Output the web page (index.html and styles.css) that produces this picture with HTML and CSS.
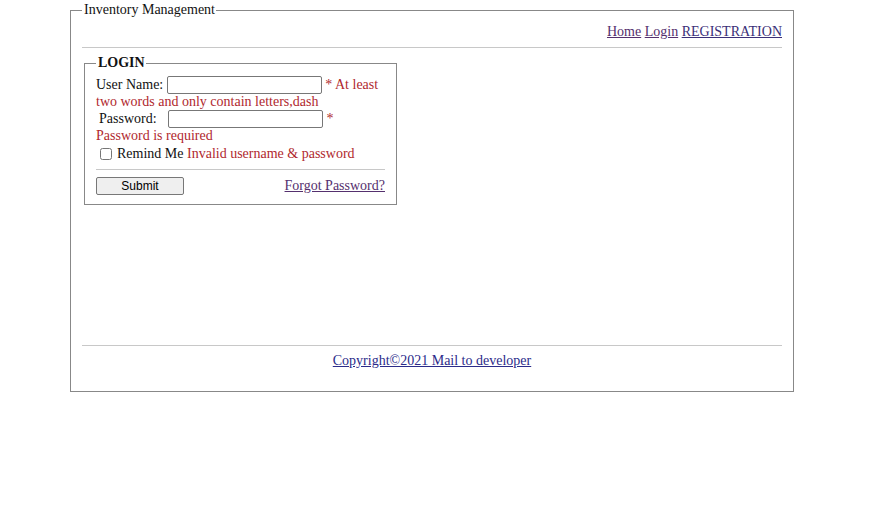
FILE: index.html
```html
<!DOCTYPE html>
<html>
<head>
<meta charset="utf-8">
<link rel="stylesheet" href="styles.css">
</head>
<body>
<fieldset class="main">
  <legend class="main-legend">Inventory Management</legend>
  <nav class="nav">
    <a href="#" class="visited">Home</a> <a href="#" class="visited">Login</a> <a href="#" class="reg">REGISTRATION</a>
  </nav>
  <hr class="rule">
  <div class="content">
    <fieldset class="login">
      <legend class="login-legend">LOGIN</legend>
      <div class="row first">User Name: <input class="field" type="text"> <span class="err">* At least</span></div>
      <div class="err line">two words and only contain letters,dash</div>
      <div class="row pw">Password: <input class="field" type="password"> <span class="err">*</span></div>
      <div class="err line">Password is required</div>
      <div class="row remind"><input class="check" type="checkbox"><span class="remind-text">Remind Me <span class="err">Invalid username &amp; password</span></span></div>
      <hr class="inner-rule">
      <div class="actions">
        <button class="submit">Submit</button>
        <a href="#" class="visited">Forgot Password?</a>
      </div>
    </fieldset>
  </div>
  <hr class="rule">
  <div class="footer"><a href="#" class="copy">Copyright©2021 Mail to developer</a></div>
</fieldset>
</body>
</html>
```
FILE: styles.css
```css
body {
  margin: 2px 8px 8px 8px;
  font-family: "Liberation Serif", "Times New Roman", serif;
  font-size: 14px;
  color: #111;
  background: #fff;
}
a { color: #2b2b8a; }
a.visited { color: #55306e; }
a.reg { color: #3b2f78; }
.main {
  width: 724px;
  height: 390px;
  margin: 0 0 0 62px;
  padding: 0 11px 10px 11px;
  border: 1px solid #888;
  display: flex;
  flex-direction: column;
  box-sizing: border-box;
}
.main-legend {
  padding: 0 1px 0 2px;
  font-size: 14px;
}
.nav {
  text-align: right;
  margin-top: 6px;
}
.rule {
  border: 0;
  border-top: 1px solid #c8c8c8;
  margin: 7px 0 0 0;
  height: 0;
}
.content {
  flex: 1;
  padding-top: 7px;
}
.login {
  width: 313px;
  box-sizing: border-box;
  margin: 0 0 0 2px;
  padding: 5px 11px 9px 11px;
  border: 1px solid #888;
}
.login-legend {
  font-weight: bold;
  padding: 0 1px 0 2px;
  font-size: 14px;
}
.row {
  display: flex;
  align-items: center;
  gap: 4px;
  height: 17px;
}
.field {
  width: 155px;
  height: 18px;
  box-sizing: border-box;
  border: 1px solid #777;
  border-radius: 2px;
  padding: 0;
  margin: 0;
}
.first .err { margin-left: -1px; }
.pw { padding-left: 3px; }
.pw .field { margin-left: 7px; }
.err { color: #b0282e; }
.line { height: 17px; line-height: 17px; }
.remind { padding-left: 4px; gap: 5px; height: 18px; margin-top: 1px; }
.check { margin: 0; width: 12px; height: 12px; }
.inner-rule {
  border: 0;
  border-top: 1px solid #c8c8c8;
  margin: 6px 0 0 0;
}
.actions {
  display: flex;
  justify-content: space-between;
  align-items: center;
  margin-top: 7px;
}
.submit {
  width: 88px;
  height: 18px;
  font-family: "Liberation Sans", Arial, sans-serif;
  font-size: 12px;
  background: #efefef;
  border: 1px solid #777;
  border-radius: 2px;
  padding: 0;
}
.footer {
  text-align: center;
  padding-top: 7px;
  padding-bottom: 12px;
}
```
